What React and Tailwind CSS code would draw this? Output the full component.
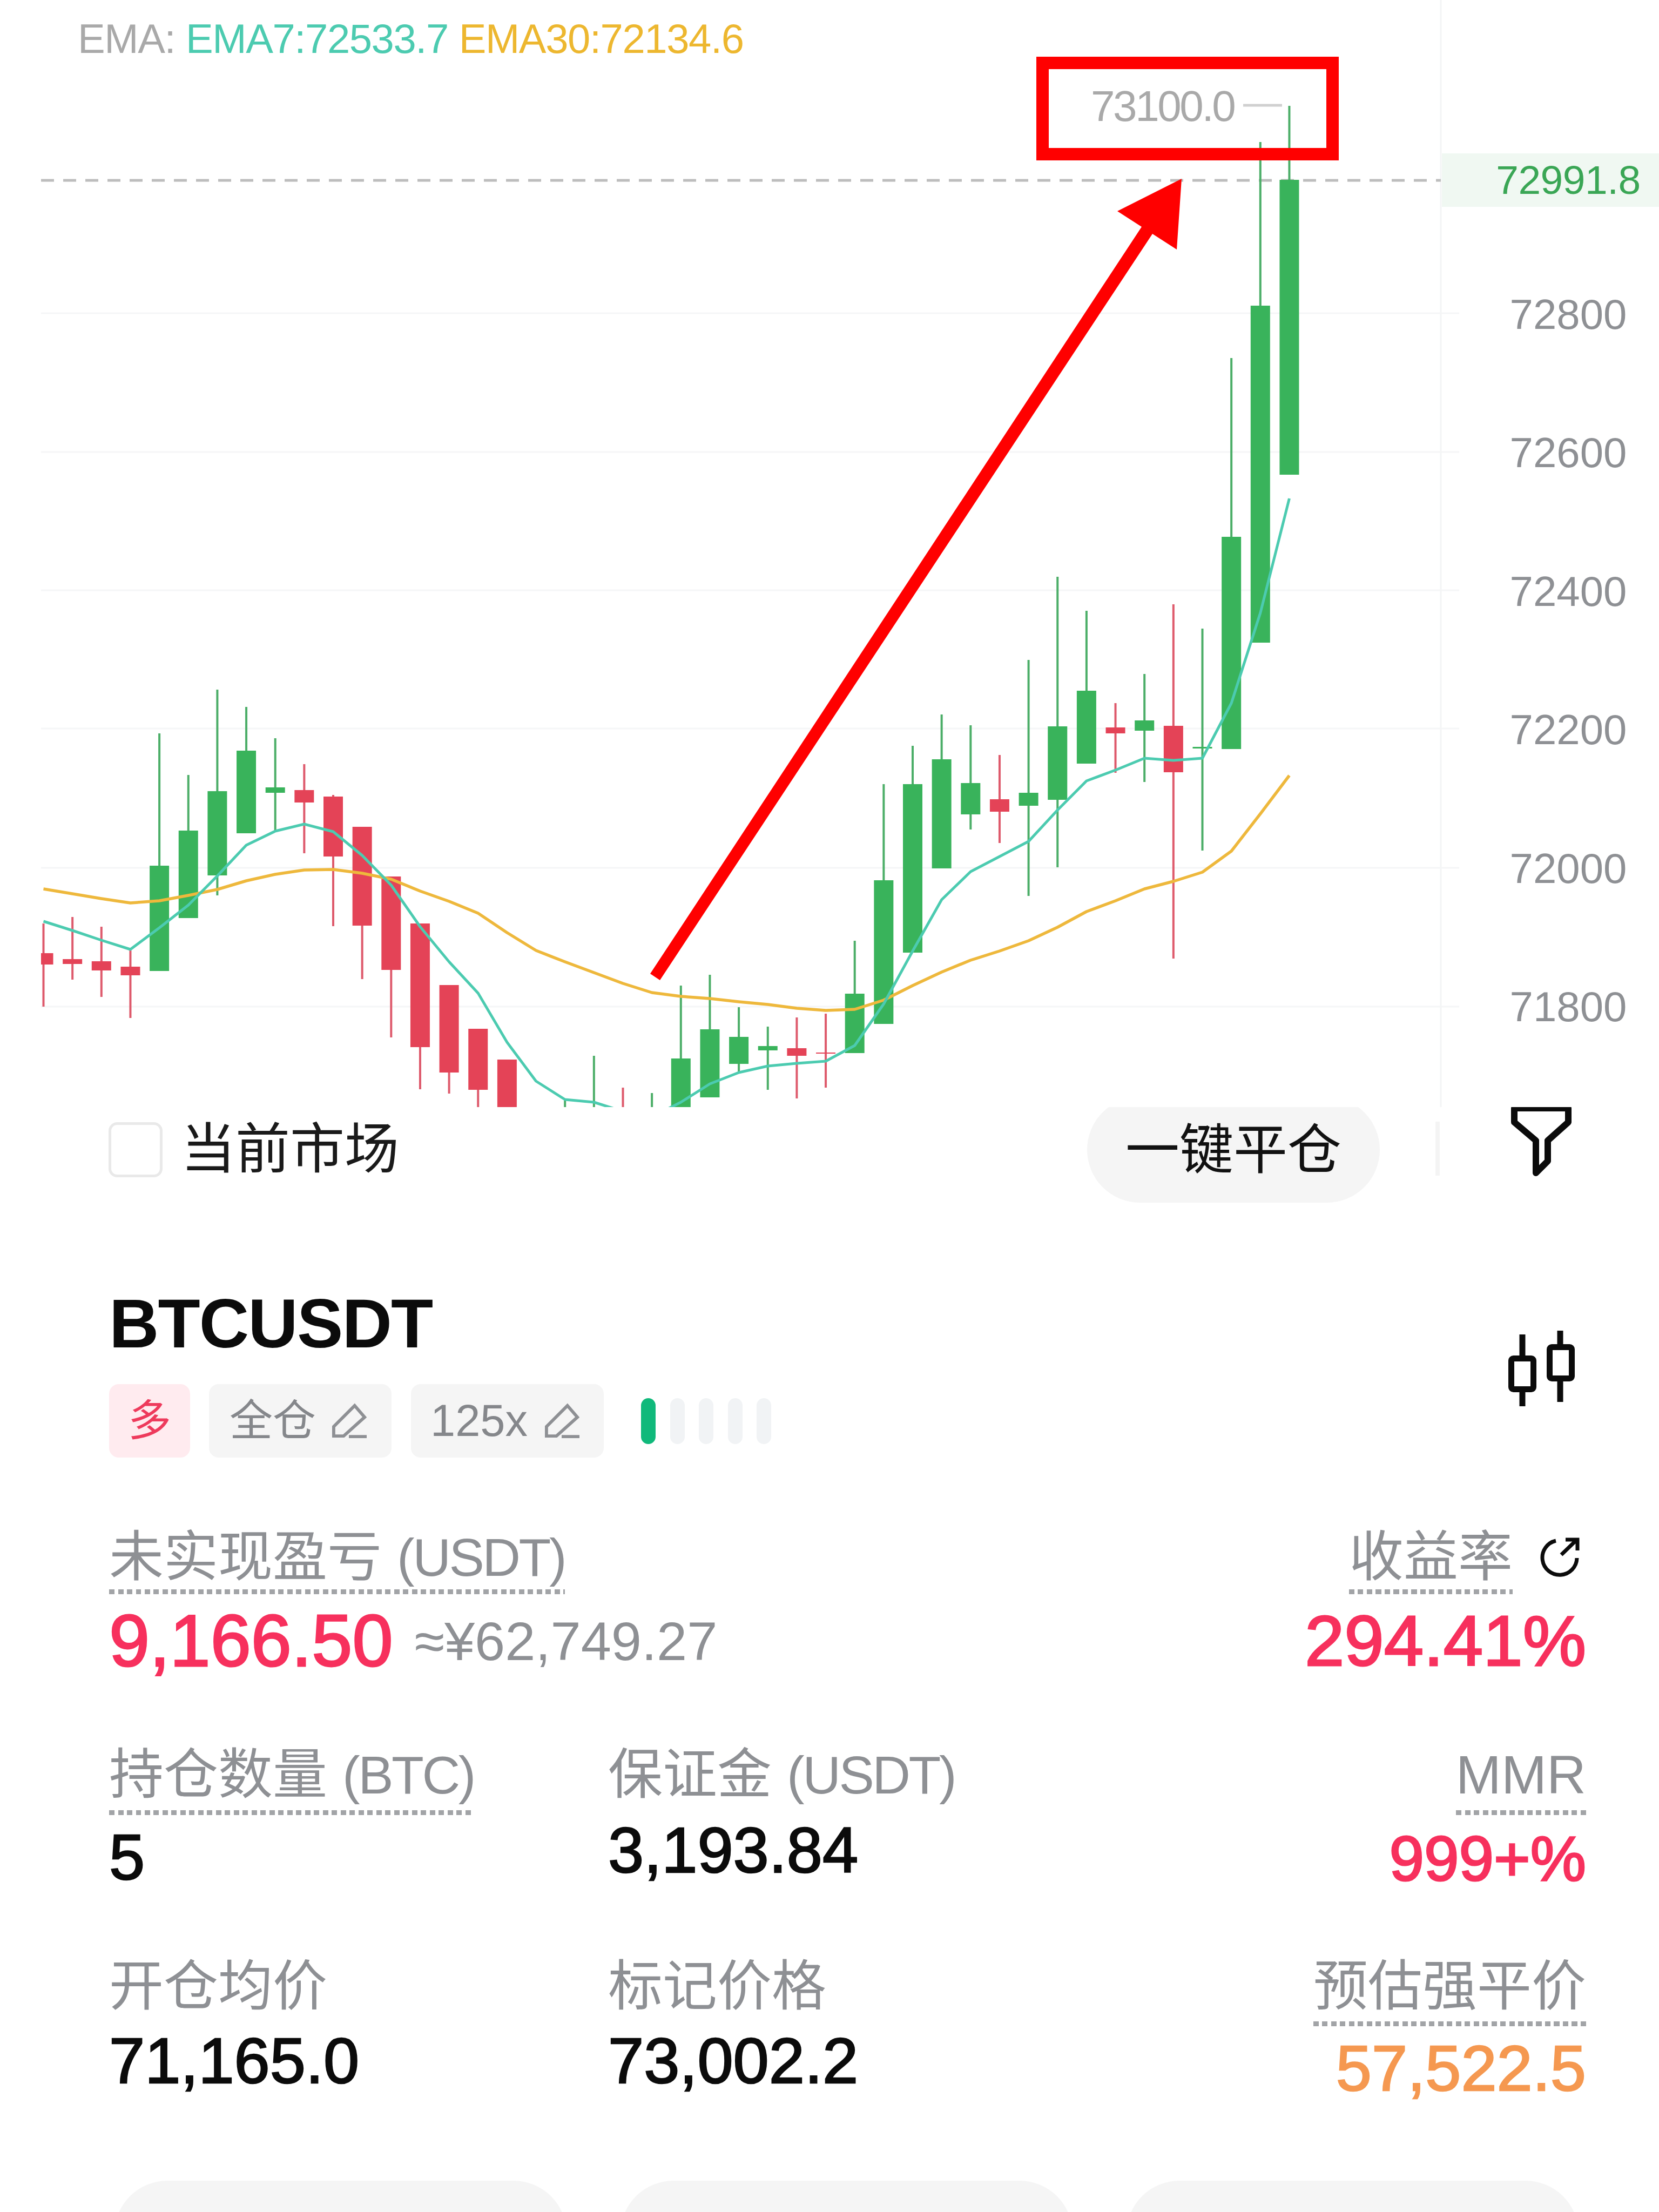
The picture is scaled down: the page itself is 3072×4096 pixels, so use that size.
import React from "react";

// [wick top, wick bottom, body top, body bottom, up?]
const candles = [
  [1710, 1864, 1765, 1786, 0],
  [1698, 1814, 1776, 1785, 0],
  [1716, 1846, 1780, 1797, 0],
  [1760, 1885, 1790, 1806, 0],
  [1358, 1798, 1603, 1798, 1],
  [1435, 1700, 1538, 1700, 1],
  [1277, 1658, 1465, 1621, 1],
  [1309, 1543, 1390, 1543, 1],
  [1367, 1537, 1458, 1468, 1],
  [1415, 1580, 1463, 1486, 0],
  [1472, 1715, 1475, 1586, 0],
  [1531, 1813, 1531, 1714, 0],
  [1623, 1921, 1623, 1796, 0],
  [1710, 2017, 1710, 1939, 0],
  [1824, 2025, 1824, 1986, 0],
  [1905, 2060, 1905, 2018, 0],
  [1962, 2060, 1962, 2060, 0],
  null,
  [2038, 2060, 2060, 2060, 1],
  [1955, 2060, 2060, 2060, 1],
  [2014, 2060, 2060, 2060, 0],
  [2024, 2060, 2060, 2060, 1],
  [1825, 2060, 1960, 2060, 1],
  [1805, 2032, 1906, 2032, 1],
  [1865, 1984, 1920, 1970, 1],
  [1901, 2018, 1937, 1945, 1],
  [1884, 2034, 1941, 1955, 0],
  [1877, 2014, 1949, 1951, 0],
  [1742, 1950, 1840, 1950, 1],
  [1452, 1896, 1630, 1896, 1],
  [1381, 1764, 1452, 1764, 1],
  [1323, 1608, 1406, 1608, 1],
  [1343, 1536, 1450, 1508, 1],
  [1398, 1561, 1480, 1503, 0],
  [1222, 1659, 1468, 1492, 1],
  [1068, 1606, 1345, 1481, 1],
  [1131, 1414, 1279, 1414, 1],
  [1302, 1431, 1347, 1358, 0],
  [1248, 1448, 1334, 1353, 1],
  [1119, 1775, 1344, 1430, 0],
  [1164, 1575, 1383, 1386, 1],
  [663, 1387, 994, 1387, 1],
  [263, 1190, 566, 1190, 1],
  [196, 879, 333, 879, 1],
];

const ema7 = [
  1706, 1723, 1741, 1758, 1718, 1676, 1622, 1565, 1539, 1526, 1540, 1584, 1639, 1716, 1781, 1839, 1930, 2002, 2036,
  2041, 2058, 2068, 2041, 2007, 1986, 1974, 1969, 1965, 1936, 1859, 1761, 1666, 1614, 1586, 1558, 1500, 1446, 1426,
  1404, 1408, 1404, 1302, 1135, 923,
];

const ema30 = [
  1646, 1655, 1664, 1672, 1668, 1658, 1647, 1631, 1619, 1611, 1610, 1617, 1628, 1650, 1669, 1691, 1727, 1760, 1781,
  1801, 1821, 1838, 1845, 1849, 1855, 1860, 1867, 1871, 1869, 1852, 1825, 1800, 1778, 1761, 1742, 1717, 1688, 1668,
  1646, 1632, 1615, 1576, 1507, 1436,
];

const grid = [580, 837, 1093, 1349, 1607, 1864];
const axis = ["72800", "72600", "72400", "72200", "72000", "71800"];

const xAt = (i) => 80.5 + 53.65 * i;
const toPoints = (ys) => ys.map((y, i) => `${xAt(i)},${y}`).join(" ");

const Chart = () => (
  <svg className="absolute left-0 top-0" width="3072" height="2050">
    <defs>
      <clipPath id="plot">
        <rect x="76" y="0" width="2592" height="2050" />
      </clipPath>
    </defs>
    {grid.map((y) => (
      <line key={y} x1="76" x2="2702" y1={y} y2={y} stroke="#f5f6f7" strokeWidth="3" />
    ))}
    <line x1="2668" x2="2668" y1="0" y2="2050" stroke="#f4f5f6" strokeWidth="3" />
    <line x1="2302" x2="2374" y1="195" y2="195" stroke="#d0d0d0" strokeWidth="5" />
    <line x1="76" x2="2668" y1="334" y2="334" stroke="#bdbdbd" strokeWidth="5" strokeDasharray="24 17" />
    <g clipPath="url(#plot)">
      {candles.map((c, i) => {
        if (!c) return null;
        const color = c[4] ? "#39b35b" : "#e44357";
        const x = xAt(i);
        return (
          <g key={i}>
            <line x1={x} x2={x} y1={c[0]} y2={c[1]} stroke={c[4] ? "#4cae68" : "#de5a6c"} strokeWidth="4" />
            <rect x={x - 18} y={c[2]} width="36" height={c[3] - c[2]} fill={color} />
          </g>
        );
      })}
      <polyline points={toPoints(ema30)} fill="none" stroke="#eeb83c" strokeWidth="5.5" strokeLinejoin="round" />
      <polyline points={toPoints(ema7)} fill="none" stroke="#4ccbb0" strokeWidth="5" strokeLinejoin="round" />
    </g>
    <polygon
      points="2188,331 2179,462 2134,433 1222,1815 1204,1803 2114,420 2069,391"
      fill="#ff0000"
    />
  </svg>
);

const Pencil = () => (
  <svg width="64" height="66" viewBox="0 0 66 66" fill="none" stroke="#8e9094" strokeWidth="6">
    <path d="M3 62V44L43 4L62 26L22 62Z" />
    <path d="M32 63H66" />
  </svg>
);

const Tag = ({ className, children }) => (
  <div className={`flex h-[136px] items-center rounded-[18px] ${className}`}>{children}</div>
);

// dotted is the class for the gap between the text and its dotted line
const Label = ({ zh, en, dotted }) => (
  <div className="inline-block">
    <div className="h-[100px] text-[101px] leading-[100px] whitespace-nowrap text-[#8e9094]">
      {zh}
      {en && <span className="ml-[28px] text-[98px] tracking-[-3.5px]">{en}</span>}
    </div>
    {dotted && (
      <div className={`h-[9px] bg-[repeating-linear-gradient(90deg,#a2a4a7_0_10px,transparent_10px_16.5px)] ${dotted}`} />
    )}
  </div>
);

const Value = ({ className, children }) => (
  <div className={`h-[100px] leading-[100px] whitespace-nowrap ${className}`}>{children}</div>
);

export default function App() {
  return (
    <div className="h-[4096px] w-[3072px] overflow-hidden bg-white font-['Liberation_Sans','Noto_Sans_CJK_SC',sans-serif]">
      {/* chart */}
      <div className="relative z-10 flex h-[2050px] bg-white">
        <Chart />
        <div className="relative flex-1 pl-[144px] pt-[28px] text-[76px] leading-[88px] tracking-[-1.4px] whitespace-nowrap">
          <span className="text-[#a9a9a9]">EMA: </span>
          <span className="text-[#4ccbb0]">EMA7:72533.7 </span>
          <span className="text-[#edb72f]">EMA30:72134.6</span>
          <div className="absolute left-[2020px] top-[152px] text-[80px] leading-[90px] tracking-[-3.4px] text-[#a9a9a9]">
            73100.0
          </div>
        </div>
        <div className="relative w-[402px] pt-[284px] text-[#8e9094]">
          <div className="flex h-[99px] items-center justify-center bg-[#f0f8f2] pl-[66px] text-[75px] tracking-[-0.5px] text-[#3aa655]">
            72991.8
          </div>
          <div className="mt-[71px]">
            {axis.map((v) => (
              <div key={v} className="flex h-[256.5px] items-center justify-center pl-[66px] text-[78px]">
                {v}
              </div>
            ))}
          </div>
        </div>
        <div className="absolute left-[1919px] top-[105px] h-[192px] w-[560px] border-[23px] border-[#ff0000]" />
      </div>

      {/* filter row */}
      <div className="-mt-[19px] flex h-[196px] items-center pl-[201px] pr-[152px]">
        <div className="h-[102px] w-[100px] rounded-[16px] border-[5px] border-[#e9e9e9]" />
        <div className="ml-[34px] text-[101px] text-[#1a1a1a]">当前市场</div>
        <div className="ml-auto flex h-[196px] w-[542px] items-center justify-center rounded-full bg-[#f5f5f5] text-[100px] text-[#111]">
          一键平仓
        </div>
        <div className="mb-[4px] ml-[103px] h-[100px] w-[8px] bg-[#f4f4f4]" />
        <svg className="mb-[28px] ml-[124px]" width="130" height="150" viewBox="0 0 130 150" fill="none" stroke="#0b0b0b" strokeWidth="12">
          <path d="M14 12H114V38L76 72V110L54 132V72L14 38Z" strokeLinejoin="round" />
        </svg>
      </div>

      {/* position header */}
      <div className="mt-[154px] flex justify-between pl-[202px] pr-[152px]">
        <div>
          <div className="text-[128px] font-bold leading-[140px] tracking-[-1.9px] text-[#0b0b0b]">BTCUSDT</div>
          <div className="mt-[42px] flex items-center">
            <Tag className="w-[150px] justify-center bg-[#ffebef] text-[80px] text-[#ee3a5c]">多</Tag>
            <Tag className="ml-[35px] w-[338px] bg-[#f5f5f5] pl-[38px] text-[80px] text-[#85878b]">
              全仓
              <span className="ml-[30px]">
                <Pencil />
              </span>
            </Tag>
            <Tag className="ml-[36px] w-[357px] bg-[#f5f5f5] pl-[36px] text-[83px] text-[#85878b]">
              125x
              <span className="ml-[32px]">
                <Pencil />
              </span>
            </Tag>
            <div className="ml-[69px] flex gap-[26.5px]">
              <div className="h-[85px] w-[27px] rounded-full bg-[#10b97b]" />
              <div className="h-[85px] w-[27px] rounded-full bg-[#f1f3f5]" />
              <div className="h-[85px] w-[27px] rounded-full bg-[#f1f3f5]" />
              <div className="h-[85px] w-[27px] rounded-full bg-[#f1f3f5]" />
              <div className="h-[85px] w-[27px] rounded-full bg-[#f1f3f5]" />
            </div>
          </div>
        </div>
        <svg className="mt-[79px]" width="130" height="146" viewBox="0 0 130 146" fill="none" stroke="#0b0b0b" strokeWidth="11">
          <path d="M29 11V144M99 4V136" />
          <rect x="8.5" y="55.5" width="41" height="57" rx="4" fill="#fff" />
          <rect x="79.5" y="34.5" width="41" height="58" rx="4" fill="#fff" />
        </svg>
      </div>

      {/* metrics */}
      <div className="mt-[134px] pl-[202px] pr-[135px]">
        <div className="flex items-start justify-between">
          <div>
            <Label zh="未实现盈亏" en="(USDT)" dotted="mt-[10px]" />
            <div className="mt-[37px] flex items-center">
              <Value className="text-[135px] text-[#f7305d] [-webkit-text-stroke:3px_#f7305d]">9,166.50</Value>
              <Value className="ml-[40px] text-[101px] text-[#8e9094]">≈¥62,749.27</Value>
            </div>
          </div>
          <div className="flex flex-col items-end">
            <div className="flex items-start">
              <Label zh="收益率" dotted="mt-[10px]" />
              <svg className="ml-[50px] mr-[12px] mt-[14px]" width="74" height="76" viewBox="0 0 74 76" fill="none" stroke="#0b0b0b" strokeWidth="7">
                <path d="M30 6A32 32 0 1 0 69 38" />
                <path d="M40 32L68 5M48 4H70V24" />
              </svg>
            </div>
            <Value className="mt-[37px] text-[132px] text-[#f7305d] [-webkit-text-stroke:3px_#f7305d]">294.41%</Value>
          </div>
        </div>

        <div className="mt-[147px] flex items-start">
          <div className="w-[924px]">
            <Label zh="持仓数量" en="(BTC)" dotted="mt-[16px]" />
            <Value className="mt-[28px] text-[119px] text-[#0b0b0b] [-webkit-text-stroke:2.5px_#0b0b0b]">5</Value>
          </div>
          <div className="flex-1">
            <Label zh="保证金" en="(USDT)" />
            <Value className="mt-[40px] text-[119px] text-[#0b0b0b] [-webkit-text-stroke:2.5px_#0b0b0b]">3,193.84</Value>
          </div>
          <div className="flex flex-col items-end">
            <Label zh="MMR" dotted="mt-[16px]" />
            <Value className="mt-[31px] text-[116px] text-[#f7305d] [-webkit-text-stroke:3px_#f7305d]">999+%</Value>
          </div>
        </div>

        <div className="mt-[136px] flex items-start">
          <div className="w-[924px]">
            <Label zh="开仓均价" />
            <Value className="mt-[38px] text-[119px] text-[#0b0b0b] [-webkit-text-stroke:2.5px_#0b0b0b]">71,165.0</Value>
          </div>
          <div className="flex-1">
            <Label zh="标记价格" />
            <Value className="mt-[38px] text-[119px] text-[#0b0b0b] [-webkit-text-stroke:2.5px_#0b0b0b]">73,002.2</Value>
          </div>
          <div className="flex flex-col items-end">
            <Label zh="预估强平价" dotted="mt-[15px]" />
            <Value className="mt-[28px] text-[119px] text-[#f59850] [-webkit-text-stroke:2.5px_#f59850]">57,522.5</Value>
          </div>
        </div>
      </div>

      {/* bottom buttons, cut by the screen edge */}
      <div className="mt-[158px] grid grid-cols-3 gap-[100px] pl-[212px] pr-[149px]">
        <div className="h-[196px] rounded-full bg-[#f5f5f5]" />
        <div className="h-[196px] rounded-full bg-[#f5f5f5]" />
        <div className="h-[196px] rounded-full bg-[#f5f5f5]" />
      </div>
    </div>
  );
}
